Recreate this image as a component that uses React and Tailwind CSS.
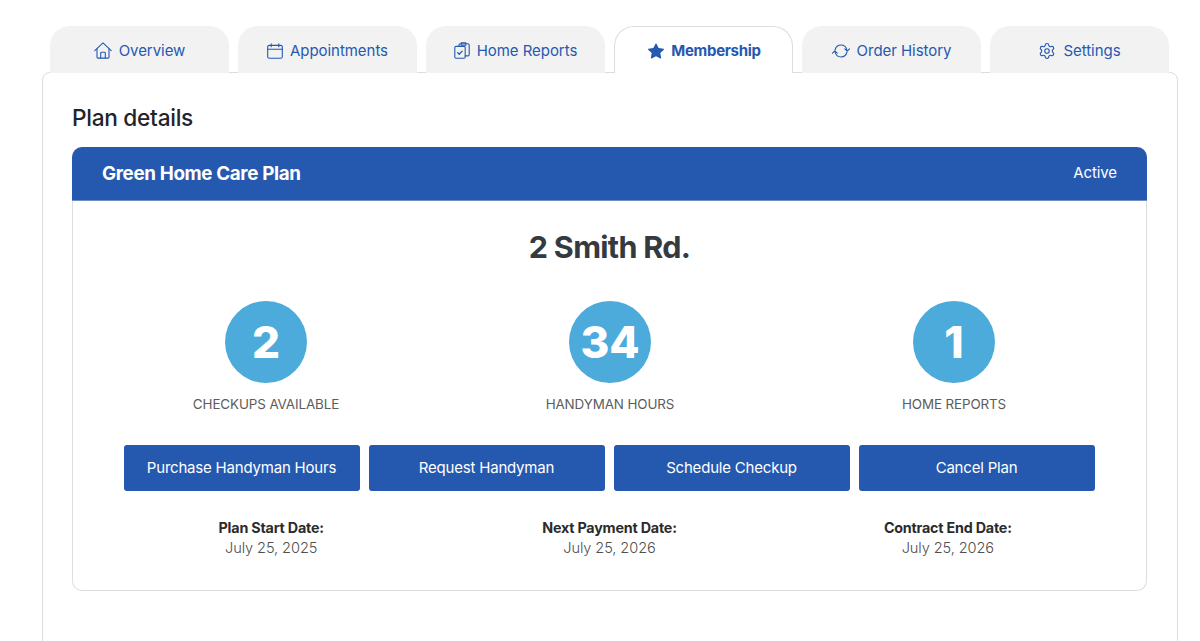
import { BsStarFill } from "react-icons/bs";
import { Settings } from "lucide-react";

const HomeIcon = ({ className }) => (
  <svg viewBox="0 0 18 17" fill="none" stroke="currentColor" strokeWidth="1.1" strokeLinejoin="round" strokeLinecap="round" className={className}>
    <path d="M.8 8.6 9 .9l8.2 7.7" />
    <path d="M3 6.8v8.4c0 .5.4.9.9.9h10.2c.5 0 .9-.4.9-.9V6.8" />
    <path d="M6.7 16v-4.9c0-.5.4-.9.9-.9h2.8c.5 0 .9.4.9.9V16" />
  </svg>
);

const CalendarIcon = ({ className }) => (
  <svg viewBox="0 0 16 16" fill="none" stroke="currentColor" strokeWidth="1.1" strokeLinecap="round" className={className}>
    <rect x=".7" y="2.4" width="14.6" height="12.9" rx="1.6" />
    <path d="M.7 6.3h14.6M4.2.7v3M11.8.7v3" />
  </svg>
);

const ReportsIcon = ({ className }) => (
  <svg viewBox="0 0 16 17" fill="none" stroke="currentColor" strokeWidth="1.1" strokeLinejoin="round" strokeLinecap="round" className={className}>
    <rect x=".8" y="4.4" width="10.4" height="11.9" rx="1.2" />
    <path d="M5 4.4V2.7c0-.6.4-1 1-1h7.8c.8 0 1.4.6 1.4 1.4v9.4c0 .8-.6 1.4-1.4 1.4h-2.6" />
    <path d="M7.2 1.7V.8h4.6v.9M7.2 1.7v1.5h4.6V1.7" />
    <path d="M3.6 10.6l1.6 1.7 3-3.2" strokeWidth="1.3" />
  </svg>
);

const RepeatIcon = ({ className }) => (
  <svg viewBox="0 0 18 14" fill="none" stroke="currentColor" strokeWidth="1.1" strokeLinejoin="round" strokeLinecap="round" className={className}>
    <path d="M3 6C3.8 3 6.2 1 9 1c3 0 5.3 2 6 5.5" />
    <path d="M12.8 4.8 15.2 7l2.3-2.2" />
    <path d="M15 8c-.8 3-3.2 5-6 5-3 0-5.3-2-6-5.5" />
    <path d="M.5 9.2 2.8 7l2.4 2.2" />
  </svg>
);

const tabs = [
  { label: "Overview", icon: HomeIcon, iconClass: "h-[17px] w-[18px]" },
  { label: "Appointments", icon: CalendarIcon, iconClass: "h-[16px] w-[16px]" },
  { label: "Home Reports", icon: ReportsIcon, iconClass: "h-[17px] w-[16px]" },
  { label: "Membership", icon: BsStarFill, iconClass: "h-[16px] w-[16px]", active: true },
  { label: "Order History", icon: RepeatIcon, iconClass: "h-[14px] w-[18px]" },
  { label: "Settings", icon: Settings, iconClass: "h-[18px] w-[18px] stroke-[1.5]" },
];

const stats = [
  { value: "2", label: "CHECKUPS AVAILABLE" },
  { value: "34", label: "HANDYMAN HOURS" },
  { value: "1", label: "HOME REPORTS" },
];

const actions = ["Purchase Handyman Hours", "Request Handyman", "Schedule Checkup", "Cancel Plan"];

const dates = [
  { label: "Plan Start Date:", value: "July 25, 2025" },
  { label: "Next Payment Date:", value: "July 25, 2026" },
  { label: "Contract End Date:", value: "July 25, 2026" },
];

export default function App() {
  return (
    <div className="h-[641px] overflow-hidden bg-white pt-[26px] pl-[42px] pr-[22px] font-['Inter',sans-serif]">
      {/* Tabs */}
      <div className="relative z-10 grid grid-cols-6 gap-[9px] pl-2 pr-[9px]">
        {tabs.map((tab) => {
          const Icon = tab.icon;
          return (
            <div
              key={tab.label}
              className={`flex h-[47px] items-center justify-center gap-[7px] rounded-t-[20px] pt-[2px] text-[15px] text-[#2559b0] ${
                tab.active
                  ? "border border-b-0 border-[#dddddd] bg-white pl-[2px] font-bold tracking-[-0.3px]"
                  : "bg-[#f2f2f2] tracking-[-0.05px]"
              }`}
            >
              <Icon className={`shrink-0 ${tab.iconClass}`} />
              <span className="pt-px">{tab.label}</span>
            </div>
          );
        })}
      </div>

      {/* Panel */}
      <div className="-mt-px h-[600px] rounded-t-[8px] border border-[#dddddd] bg-white pt-[30px] pr-[30px] pl-[29px]">
        <h2 className="text-[22.7px] leading-[30px] font-medium tracking-[-0.3px] text-[#212529]">Plan details</h2>

        <div className="mt-[14px] h-[444px] rounded-[10px] border border-t-0 border-[#dddddd]">
          <div className="-mx-px flex h-[54px] items-center justify-between rounded-t-[10px] border-b border-[#6f8fc4] bg-[#2559b0] px-[30px] text-white">
            <span className="pt-px text-[18.8px] font-bold tracking-[-0.35px]">Green Home Care Plan</span>
            <span className="text-[15px] tracking-[-0.1px]">Active</span>
          </div>

          <h3 className="mt-[27px] text-center text-[30.5px] leading-[38px] font-bold tracking-[-0.7px] text-[#343a40]">2 Smith Rd.</h3>

          <div className="mt-[35px] grid grid-cols-3 pr-[20px] pl-[21px]">
            {stats.map((stat) => (
              <div key={stat.label} className="flex flex-col items-center">
                <div className="flex h-[82px] w-[82px] items-center justify-center rounded-full bg-[#4dabdb] text-[44px] font-extrabold text-white">
                  {stat.value}
                </div>
                <div className="mt-[12px] text-[13.4px] leading-[18px] tracking-[-0.1px] text-[#5c5c5c]">{stat.label}</div>
              </div>
            ))}
          </div>

          <div className="mt-[32px] flex justify-center gap-[9px] pr-[1px]">
            {actions.map((action) => (
              <button
                key={action}
                className="h-[46px] w-[236px] rounded-[3px] bg-[#2559b0] text-[15px] tracking-[-0.2px] text-white"
              >
                {action}
              </button>
            ))}
          </div>

          <div className="mt-[27px] grid grid-cols-3 pr-[29px] pl-[29px] text-center">
            {dates.map((date) => (
              <div key={date.label}>
                <div className="text-[14.3px] leading-[20px] font-bold tracking-[-0.2px] text-[#2b2b2b]">{date.label}</div>
                <div className="text-[14.6px] leading-[21px] font-light tracking-[-0.1px] text-[#4f4f4f]">{date.value}</div>
              </div>
            ))}
          </div>
        </div>
      </div>
    </div>
  );
}
